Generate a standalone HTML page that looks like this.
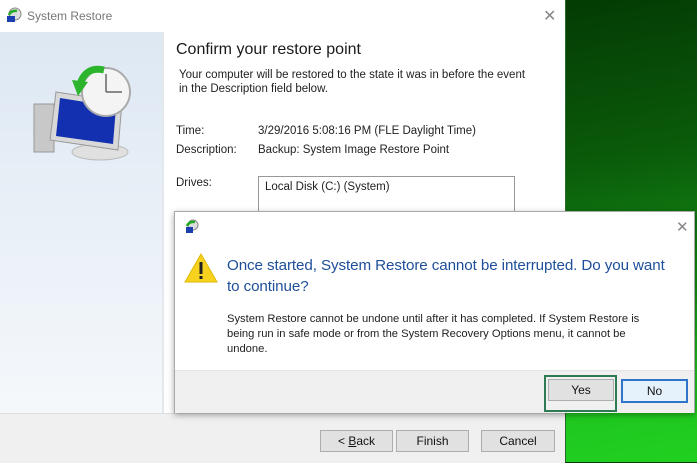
<!DOCTYPE html>
<html><head><style>
body{margin:0;width:697px;height:462px;overflow:hidden;position:relative;font-family:"Liberation Sans",sans-serif;background:linear-gradient(170deg,#002800 0%,#0a5a0a 45%,#138f13 70%,#1fc41f 85%,#20d020 100%)}
.a{position:absolute}
.win{left:0;top:0;width:565px;height:462px;background:#fff;border-right:1px solid #2a6a2a}
.t{font-size:12px;color:#222}
.btn{position:absolute;height:20px;background:#e1e1e1;border:1px solid #adadad;font-size:12px;text-align:center;line-height:20px;color:#111}
</style></head><body>
<div class="a win">
 <svg class="a" style="left:6px;top:7px" width="16" height="16"><circle cx="9" cy="7" r="6" fill="#ddd" stroke="#888"/><path d="M3 8 q2-5 8-4" stroke="#2a2" stroke-width="2.5" fill="none"/><rect x="1" y="9" width="8" height="6" fill="#1a3fb0"/></svg>
 <div class="a" style="left:27px;top:9px;font-size:12px;color:#777">System Restore</div>
 <div class="a" style="left:543px;top:6px;font-size:16px;color:#888">✕</div>
 <div class="a" style="left:0;top:32px;width:162px;height:381px;background:linear-gradient(#dde8f3,#eef3f9 70%,#f5f8fb)"></div>
 <div class="a" style="left:162px;top:32px;width:2px;height:381px;background:#e4e8ec"></div>
 <svg class="a" style="left:30px;top:62px" width="110" height="100">
  <rect x="4" y="42" width="20" height="48" fill="#c8c8c8" stroke="#999"/>
  <ellipse cx="70" cy="90" rx="28" ry="8" fill="#e0e0e0" stroke="#bbb"/>
  <polygon points="26,30 92,40 88,88 20,78" fill="#d8d8d8" stroke="#999"/>
  <polygon points="30,36 86,45 83,82 26,74" fill="#1230b0"/>
  <circle cx="76" cy="30" r="24" fill="#f4f4f4" stroke="#aaa" stroke-width="2"/>
  <path d="M76 30 V12 M76 30 H92" stroke="#666" stroke-width="1.5"/>
  <path d="M74 8 Q56 4 50 22" stroke="#2cb52c" stroke-width="7" fill="none"/>
  <polygon points="42,18 58,20 48,34" fill="#2cb52c"/>
 </svg>
 <div class="a" style="left:176px;top:41px;font-size:16px;color:#1a1a1a">Confirm your restore point</div>
 <div class="a t" style="left:179px;top:68px;line-height:14px;font-size:11.5px">Your computer will be restored to the state it was in before the event<br>in the Description field below.</div>
 <div class="a t" style="left:176px;top:125px;font-size:11.5px">Time:</div>
 <div class="a t" style="left:258px;top:125px;font-size:11.5px">3/29/2016 5:08:16 PM (FLE Daylight Time)</div>
 <div class="a t" style="left:176px;top:144px;font-size:11.5px">Description:</div>
 <div class="a t" style="left:258px;top:144px;font-size:11.5px">Backup: System Image Restore Point</div>
 <div class="a t" style="left:176px;top:177px;font-size:11.5px">Drives:</div>
 <div class="a" style="left:258px;top:176px;width:255px;height:60px;border:1px solid #999"></div>
 <div class="a t" style="left:265px;top:181px;font-size:11.5px">Local Disk (C:) (System)</div>
 <div class="a" style="left:0;top:413px;width:565px;height:49px;background:#f0f0f0;border-top:1px solid #ddd"></div>
 <div class="btn" style="left:320px;top:430px;width:71px">&lt; <u>B</u>ack</div>
 <div class="btn" style="left:396px;top:430px;width:71px">Finish</div>
 <div class="btn" style="left:481px;top:430px;width:72px">Cancel</div>
</div>
<div class="a" style="left:174px;top:211px;width:519px;height:200px;background:#fff;border:1px solid #aaa;box-shadow:0 2px 6px rgba(0,0,0,.35)">
 <svg class="a" style="left:9px;top:6px" width="16" height="16"><circle cx="9" cy="7" r="5" fill="#ddd" stroke="#888"/><path d="M3 8 q2-5 8-4" stroke="#2a2" stroke-width="2.5" fill="none"/><rect x="2" y="9" width="7" height="6" fill="#1a3fb0"/></svg>
 <div class="a" style="left:501px;top:6px;font-size:15px;color:#888">✕</div>
 <svg class="a" style="left:9px;top:40px" width="34" height="32"><polygon points="17,2 33,30 1,30" fill="#f7d21e" stroke="#e0b800"/><rect x="15.5" y="10" width="3" height="12" fill="#222"/><rect x="15.5" y="24" width="3" height="3" fill="#222"/></svg>
 <div class="a" style="left:52px;top:43px;width:445px;font-size:15.2px;line-height:21px;color:#1e4f9a;letter-spacing:-0.1px">Once started, System Restore cannot be interrupted. Do you want to continue?</div>
 <div class="a t" style="left:52px;top:100px;width:440px;font-size:11.2px;line-height:15px">System Restore cannot be undone until after it has completed. If System Restore is being run in safe mode or from the System Recovery Options menu, it cannot be undone.</div>
 <div class="a" style="left:0;top:158px;width:519px;height:42px;background:#f0f0f0;border-top:1px solid #e4e4e4"></div>
 <div class="a" style="left:369px;top:163px;width:69px;height:33px;border:2px solid #2d7a55"></div>
 <div class="btn" style="left:373px;top:167px;width:64px">Yes</div>
 <div class="btn" style="left:446px;top:167px;width:63px;border:2px solid #2e74c9;background:#e5f1fb">No</div>
</div>
</body></html>
